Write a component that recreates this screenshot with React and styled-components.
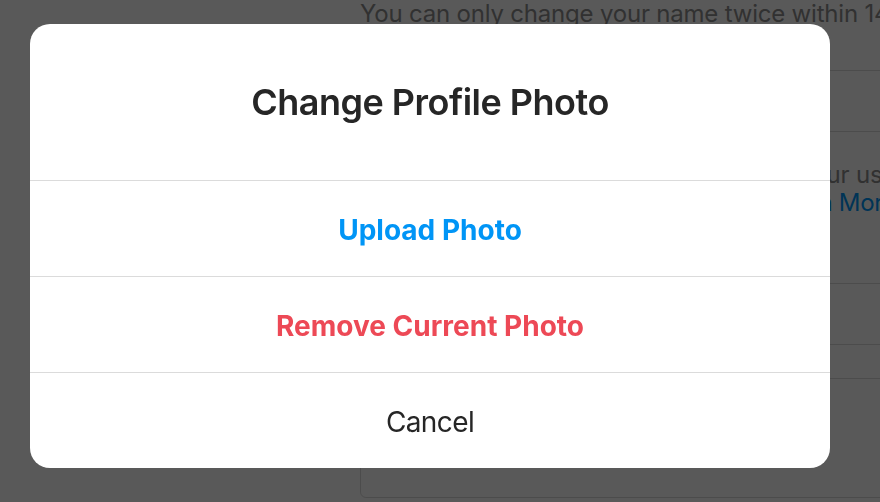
import React from "react";
import styled, { createGlobalStyle } from "styled-components";

const GlobalStyle = createGlobalStyle`
  html, body {
    margin: 0;
    padding: 0;
    background: #ffffff;
    font-family: Inter, "Noto Sans", "Liberation Sans", sans-serif;
    overflow: hidden;
  }
`;

// the edit-profile form that sits behind the modal
const Page = styled.div`
  width: 880px;
  height: 502px;
  overflow: hidden;
  background: #ffffff;
  padding-left: 360px;
  box-sizing: border-box;
`;

const Help = styled.p`
  margin: 0;
  font-size: 24px;
  line-height: 28px;
  letter-spacing: ${(p) => p.ls || "-0.2px"};
  color: #8e8e8e;
  white-space: nowrap;
  padding-top: ${(p) => p.top || 0}px;
`;

const LearnMore = styled.span`
  color: #0095f6;
`;

const Field = styled.div`
  height: ${(p) => p.h}px;
  margin-top: ${(p) => p.mt}px;
  border: 1px solid #dbdbdb;
  border-radius: 6px;
  box-sizing: border-box;
  width: 700px;
`;

const Overlay = styled.div`
  position: fixed;
  inset: 0;
  background: rgba(0, 0, 0, 0.65);
  display: flex;
  align-items: center;
  justify-content: center;
  padding: 0 20px 10px 0;
`;

const Dialog = styled.div`
  width: 800px;
  background: #ffffff;
  border-radius: 20px;
  overflow: hidden;
  display: flex;
  flex-direction: column;
`;

const Header = styled.div`
  height: 156px;
  display: flex;
  align-items: center;
  justify-content: center;
`;

const Title = styled.h3`
  margin: 0;
  font-size: 36px;
  font-weight: 600;
  letter-spacing: -0.5px;
  color: #262626;
`;

const Row = styled.button`
  height: 96px;
  box-sizing: border-box;
  border: 0;
  border-top: 1px solid #dbdbdb;
  background: transparent;
  font-family: inherit;
  font-size: 28px;
  font-weight: ${(p) => (p.plain ? 400 : 700)};
  letter-spacing: ${(p) => (p.plain ? "-0.6px" : "0")};
  color: ${(p) => p.color || "#262626"};
  cursor: pointer;
  padding: 2px 0 0;
`;

export default function App() {
  return (
    <>
      <GlobalStyle />
      <Page>
        <Help>You can only change your name twice within 14 days.</Help>
        <Field h={62} mt={42} />
        <Help top={29}>
          In most cases, you'll be able to change your username back to it for another 14 days.
        </Help>
        <Help ls="-0.28px">
          ername back to janedoe for 14 days. <LearnMore>Learn More</LearnMore>
        </Help>
        <Field h={62} mt={66} />
        <Field h={120} mt={33} />
      </Page>
      <Overlay>
        <Dialog>
          <Header>
            <Title>Change Profile Photo</Title>
          </Header>
          <Row color="#0095f6">Upload Photo</Row>
          <Row color="#ed4956">Remove Current Photo</Row>
          <Row plain>Cancel</Row>
        </Dialog>
      </Overlay>
    </>
  );
}
